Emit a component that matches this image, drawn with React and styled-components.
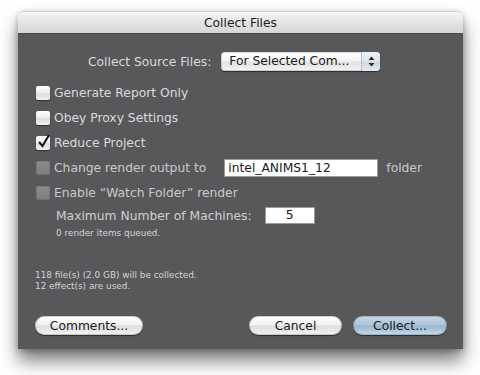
import React from 'react';
import styled, { createGlobalStyle } from 'styled-components';

const GlobalStyle = createGlobalStyle`
  html, body {
    margin: 0;
    padding: 0;
    background: #ffffff;
  }
  body {
    font-family: "DejaVu Sans", "Liberation Sans", sans-serif;
  }
`;

const Page = styled.div`
  width: 480px;
  height: 375px;
  padding: 11px 0 0 18px;
  box-sizing: border-box;
  overflow: hidden;
`;

const Window = styled.div`
  width: 445px;
  height: 338px;
  display: flex;
  flex-direction: column;
  border-radius: 6px 6px 0 0;
  box-shadow: 0 12px 18px rgba(0, 0, 0, 0.5), 0 2px 6px rgba(0, 0, 0, 0.25);
`;

const TitleBar = styled.div`
  height: 22px;
  flex: none;
  display: flex;
  align-items: center;
  justify-content: center;
  border-radius: 6px 6px 0 0;
  background: linear-gradient(#f5f5f5, #e4e4e4 50%, #d6d6d6);
  border-top: 1px solid #d0d0d0;
  box-sizing: border-box;
  font-size: 12.3px;
  color: #1e1e1e;
`;

const Body = styled.div`
  flex: 1;
  background: #58585a;
  border-top: 1px solid #4a4a4c;
  padding: 18px 16px 14px 17px;
  display: flex;
  flex-direction: column;
  color: #d9d9d9;
  font-size: 12.3px;
`;

const SourceRow = styled.div`
  height: 19px;
  display: flex;
  align-items: center;
  padding-left: 53px;
  gap: 10px;
  margin-bottom: 9px;
`;

const Popup = styled.div`
  width: 159px;
  height: 19px;
  box-sizing: border-box;
  display: flex;
  border-radius: 4px;
  background: linear-gradient(#ffffff, #f4f4f4 45%, #e2e2e2 55%, #f2f2f2);
  box-shadow: 0 1px 1px rgba(0, 0, 0, 0.5), inset 0 0 0 1px rgba(0, 0, 0, 0.15);
  color: #1a1a1a;
  overflow: hidden;
`;

const PopupText = styled.div`
  flex: 1;
  padding-left: 8px;
  line-height: 19px;
  white-space: nowrap;
`;

const Stepper = styled.div`
  width: 18px;
  border-left: 1px solid #b8bcc2;
  background: linear-gradient(#eef2f6, #dde4ec 50%, #cfd8e2 55%, #e4eaf0);
  display: flex;
  align-items: center;
  justify-content: center;
`;

const CheckRow = styled.div`
  height: 25px;
  display: flex;
  align-items: center;
  color: ${({ disabled }) => (disabled ? '#c9c9c9' : '#dadada')};
`;

const Box = styled.div`
  width: 14px;
  height: 14px;
  flex: none;
  box-sizing: border-box;
  border-radius: 2px;
  margin: 0 4px 0 1px;
  position: relative;
  background: ${({ disabled }) =>
    disabled
      ? 'linear-gradient(#8c8c8e, #7d7d7f)'
      : 'linear-gradient(#ffffff, #ececec 50%, #dcdcdc 55%, #f0f0f0)'};
  box-shadow: ${({ disabled }) =>
    disabled ? 'inset 0 0 0 1px rgba(0,0,0,0.1)' : '0 1px 1px rgba(0,0,0,0.45)'};
`;

const Check = styled.svg`
  position: absolute;
  left: 1px;
  top: -3px;
`;

const PathInput = styled.div`
  width: 154px;
  height: 18px;
  margin-left: 18px;
  box-sizing: border-box;
  background: #ffffff;
  border: 1px solid #9a9a9a;
  color: #1a1a1a;
  padding-left: 3px;
  line-height: 16px;
`;

const Trail = styled.span`
  margin-left: 8px;
`;

const MachinesRow = styled.div`
  height: 21px;
  display: flex;
  align-items: center;
  padding-left: 21px;
  color: #cfcfcf;
`;

const NumInput = styled.div`
  width: 50px;
  height: 17px;
  margin-left: 13px;
  box-sizing: border-box;
  background: #ffffff;
  border: 1px solid #9a9a9a;
  color: #1a1a1a;
  text-align: center;
  line-height: 15px;
`;

const Note = styled.div`
  font-size: 8.9px;
  line-height: 11px;
  color: #d4d4d4;
  padding-left: ${({ indent }) => indent || 0}px;
  margin-top: ${({ top }) => top || 0}px;
`;

const ButtonRow = styled.div`
  margin-top: auto;
  display: flex;
  align-items: center;
  gap: 11px;
`;

const Button = styled.button`
  width: ${({ w }) => w}px;
  height: 19px;
  padding: 0;
  border: none;
  border-radius: 10px;
  font-family: "DejaVu Sans", "Liberation Sans", sans-serif;
  font-size: 12.3px;
  color: #1a1a1a;
  background: ${({ primary }) =>
    primary
      ? 'linear-gradient(#c9d9e8, #aec4d9 45%, #9bb6cf 55%, #c6dbee)'
      : 'linear-gradient(#ffffff, #f2f2f2 45%, #dedede 55%, #f4f4f4)'};
  box-shadow: 0 1px 1px rgba(0, 0, 0, 0.5), inset 0 0 0 1px rgba(0, 0, 0, 0.18);
  margin-left: ${({ push }) => (push ? 'auto' : '0')};
`;

const CheckItem = ({ label, checked, disabled, children }) => (
  <CheckRow disabled={disabled}>
    <Box disabled={disabled}>
      {checked && (
        <Check width="14" height="16" viewBox="0 0 14 16">
          <path d="M2 9 L5.5 13 L12 2" fill="none" stroke="#1d1d1d" strokeWidth="2.2" />
        </Check>
      )}
    </Box>
    {label}
    {children}
  </CheckRow>
);

export default function App() {
  return (
    <Page>
      <GlobalStyle />
      <Window>
        <TitleBar>Collect Files</TitleBar>
        <Body>
          <SourceRow>
            <span>Collect Source Files:</span>
            <Popup>
              <PopupText>For Selected Com...</PopupText>
              <Stepper>
                <svg width="7" height="11" viewBox="0 0 7 11">
                  <path d="M3.5 0.5 L6.5 4 L0.5 4 Z" fill="#2a2a2a" />
                  <path d="M3.5 10.5 L6.5 7 L0.5 7 Z" fill="#2a2a2a" />
                </svg>
              </Stepper>
            </Popup>
          </SourceRow>
          <CheckItem label="Generate Report Only" />
          <CheckItem label="Obey Proxy Settings" />
          <CheckItem label="Reduce Project" checked />
          <CheckItem label="Change render output to" disabled>
            <PathInput>intel_ANIMS1_12</PathInput>
            <Trail>folder</Trail>
          </CheckItem>
          <CheckItem label="Enable “Watch Folder” render" disabled />
          <MachinesRow>
            Maximum Number of Machines:
            <NumInput>5</NumInput>
          </MachinesRow>
          <Note indent={21} top={2}>0 render items queued.</Note>
          <Note top={31}>118 file(s) (2.0 GB) will be collected.</Note>
          <Note>12 effect(s) are used.</Note>
          <ButtonRow>
            <Button w={108}>Comments...</Button>
            <Button w={93} push>Cancel</Button>
            <Button w={94} primary>Collect...</Button>
          </ButtonRow>
        </Body>
      </Window>
    </Page>
  );
}
